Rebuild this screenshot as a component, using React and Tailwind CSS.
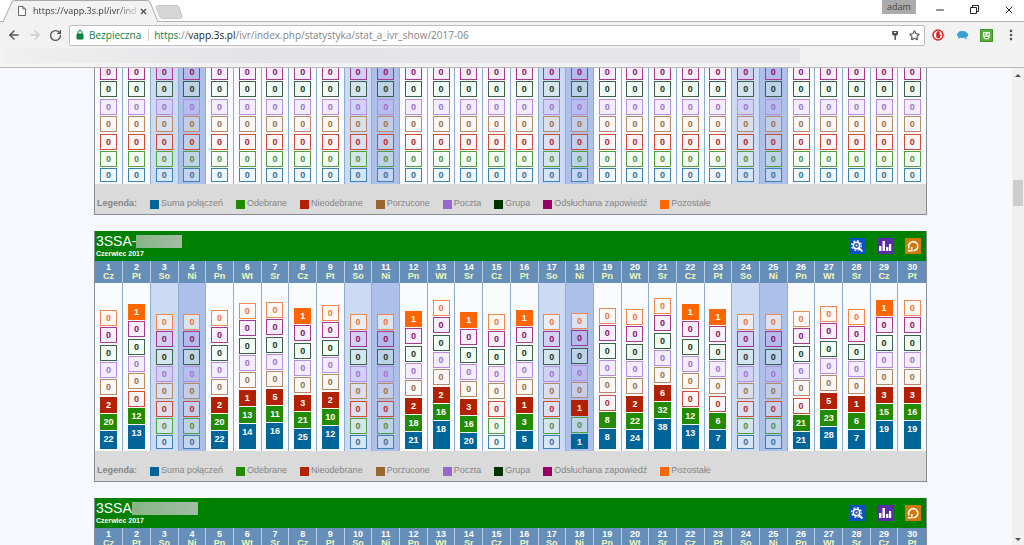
import { ArrowLeft, ArrowRight, RotateCw, Star, X, Minus, MoreVertical } from 'lucide-react'

const KINDS = [
  { label: 'Pozostałe', empty: 'border-[#f0884c] bg-[#fffaf4]/60 text-[#f0733a]', full: 'border-[#ff6600] bg-[#ff6600]', swatch: 'bg-[#ff6600]' },
  { label: 'Odsłuchana zapowiedź', empty: 'border-[#a8388a] bg-[#ff88ff]/10 text-[#8a1060]', full: 'border-[#990066] bg-[#990066]', swatch: 'bg-[#990066]' },
  { label: 'Grupa', empty: 'border-[#3f5f4c] bg-[#e0ffe0]/30 text-[#1c3424]', full: 'border-[#003300] bg-[#003300]', swatch: 'bg-[#003300]' },
  { label: 'Poczta', empty: 'border-[#b48ee0] bg-[#e0b8ff]/20 text-[#9a70cc]', full: 'border-[#9966cc] bg-[#9966cc]', swatch: 'bg-[#9966cc]' },
  { label: 'Porzucone', empty: 'border-[#b48a68] bg-[#fff0e0]/30 text-[#98704c]', full: 'border-[#996633] bg-[#996633]', swatch: 'bg-[#996633]' },
  { label: 'Nieodebrane', empty: 'border-[#d04a38] bg-[#fff0e8]/30 text-[#b42828]', full: 'border-[#b22200] bg-[#b22200]', swatch: 'bg-[#b22200]' },
  { label: 'Odebrane', empty: 'border-[#4fa23c] bg-[#e8ffe0]/30 text-[#4c8c44]', full: 'border-[#228b00] bg-[#228b00]', swatch: 'bg-[#228b00]' },
  { label: 'Suma połączeń', empty: 'border-[#3f80ac] bg-[#e0f8ff]/40 text-[#386c98]', full: 'border-[#006699] bg-[#006699]', swatch: 'bg-[#006699]' },
]

const WEEKDAYS = ['Cz', 'Pt', 'So', 'Ni', 'Pn', 'Wt', 'Sr']

// [total, answered, missed, other, bar height]
const JUNE = [
  [22, 20, 2, 0, 18], [13, 12, 0, 1, 24], [0, 0, 0, 0, 14], [0, 0, 0, 0, 14], [22, 20, 2, 0, 18],
  [14, 13, 1, 0, 25], [16, 11, 5, 0, 26], [25, 21, 3, 1, 20], [12, 10, 2, 0, 23], [0, 0, 0, 0, 14],
  [0, 0, 0, 0, 14], [21, 18, 2, 1, 17], [18, 16, 2, 0, 28], [20, 16, 3, 1, 16], [0, 0, 0, 0, 14],
  [5, 3, 1, 1, 18], [0, 0, 0, 0, 14], [1, 0, 1, 0, 15], [8, 8, 0, 0, 20], [24, 22, 2, 0, 19],
  [38, 32, 6, 0, 30], [13, 12, 0, 1, 24], [7, 6, 0, 1, 19], [0, 0, 0, 0, 14], [0, 0, 0, 0, 14],
  [21, 21, 0, 0, 17], [28, 23, 5, 0, 22], [7, 6, 1, 0, 19], [19, 15, 3, 1, 28], [19, 16, 3, 0, 28],
]
const EMPTY = JUNE.map(() => [0, 0, 0, 0, 14])

function dayBg(i) {
  const name = WEEKDAYS[i % 7]
  if (name === 'So') return 'bg-[#cddaf4]'
  if (name === 'Ni') return 'bg-[#adc0ea]'
  return 'bg-[#f9fbfe]'
}

function Day({ data, short }) {
  const [total, answered, missed, other, height] = data
  const values = [other, 0, 0, 0, 0, missed, answered]
  const sum = KINDS[7]
  return (
    <div className="flex flex-col items-center gap-px text-[9px] leading-[15px] font-bold">
      <div className={`flex flex-col justify-between ${short ? 'h-[103px]' : 'h-[120px]'}`}>
        {values.map((v, i) => (
          short && i === 0 ? null : (
            <div key={i} className={`h-4 w-[17px] border text-center ${v ? `${KINDS[i].full} text-white` : KINDS[i].empty}`}>
              {v}
            </div>
          )
        ))}
      </div>
      <div
        style={{ height }}
        className={`w-[17px] border text-center ${total ? `${sum.full} text-white` : `${sum.empty} leading-[13px]`}`}
      >
        {total}
      </div>
    </div>
  )
}

function Legend() {
  return (
    <div className="flex h-[30px] items-center gap-[13px] bg-[#dadada] pt-[10px] pl-0.5 text-[9px] whitespace-nowrap text-[#858585]">
      <span className="font-bold">Legenda:</span>
      {[...KINDS].reverse().map((k) => (
        <span key={k.label} className="flex items-center gap-0.5">
          <span className={`size-[9px] ${k.swatch}`} />
          {k.label}
        </span>
      ))}
    </div>
  )
}

function Actions() {
  return (
    <div className="flex gap-3 pr-[5px]">
      <button aria-label="Szczegóły" className="flex size-4 items-center justify-center bg-[#0b50c0]">
        <svg viewBox="0 0 16 16" className="size-4" fill="none" stroke="#fff">
          <circle cx="7.5" cy="7.5" r="3.2" strokeWidth="1.5" />
          <circle cx="7.5" cy="7.5" r="4.8" strokeWidth="1.3" strokeDasharray="1.9 1.87" />
          <circle cx="7.5" cy="7.5" r="1" fill="#fff" stroke="none" />
          <path d="M9.5 9.5l4 4" strokeWidth="1.8" />
        </svg>
      </button>
      <button aria-label="Wykres" className="flex size-4 items-center justify-center bg-[#5a2ca8]">
        <svg viewBox="0 0 16 16" className="size-4" fill="#fff">
          <path d="M2 8h2.400v5H2zM5.500 3h2.400v10H5.500zM9 9h2.400v4H9zM12 6h2.200v7H12z" />
        </svg>
      </button>
      <button aria-label="Odśwież" className="flex size-4 items-center justify-center bg-[#d07808]">
        <svg viewBox="0 0 16 16" className="size-4" fill="none" stroke="#fff" strokeWidth="1.6">
          <path d="M4.200 10.500a4.600 4.600 0 1 1 4.300 2.300" />
          <path d="M2.800 12.800h4V9" />
        </svg>
      </button>
    </div>
  )
}

function Panel({ name, blur, days, short }) {
  return (
    <section className="border border-t-0 border-[#888c94] bg-[#dadada]">
      {name && (
        <header className="flex h-[30px] items-center justify-between bg-[#008000] text-white">
          <div className="pl-px">
            <h2 className="flex items-center text-[14px] leading-4">
              {name}
              <span className={`h-[13px] bg-gradient-to-r from-[#86b586] to-[#a3bda5] ${blur}`} />
            </h2>
            <p className="text-[7px] leading-[10px] font-bold">Czerwiec 2017</p>
          </div>
          <Actions />
        </header>
      )}
      <table className="w-full table-fixed border-collapse">
        {name && (
          <thead>
            <tr className="h-[22px] bg-[#658eb8] text-[9px] leading-[9px]">
              {days.map((_, i) => (
                <th key={i} className="border-r border-[#b8cee6] p-0 text-white last:border-r-0">
                  {i + 1}
                  <span className="block text-[#f2f7c0]">{WEEKDAYS[i % 7]}</span>
                </th>
              ))}
            </tr>
          </thead>
        )}
        <tbody>
          <tr className={short ? 'h-[120px]' : 'h-[168px]'}>
            {days.map((d, i) => (
              <td key={i} className={`border-r border-[#8eabd0] p-0 pb-0.5 align-bottom last:border-r-0 ${dayBg(i)}`}>
                <Day data={d} short={short} />
              </td>
            ))}
          </tr>
        </tbody>
      </table>
      <Legend />
    </section>
  )
}

function TabBar() {
  return (
    <div className="relative flex h-[22px] items-start justify-between border-b border-[#b4b4b4] bg-white">
      <svg className="absolute top-0 left-0 h-[22px] w-[190px]" viewBox="0 0 190 22">
        <path d="M3 22L12 2Q13 .5 15 .5H147Q149 .5 150 2L158 22" fill="#f2f2f2" stroke="#a8a8a8" />
        <path d="M158 5.500H176Q178 5.500 179 7L182 16Q182 18.500 180 18.500H163Q161 18.500 160 17L156 8Q156 5.500 158 5.500" fill="#d6d6d6" stroke="#c4c4c4" />
      </svg>
      <div className="relative flex h-[22px] items-center pl-[18px]">
        <svg viewBox="0 0 8 10" className="mr-[7px] h-[10px] w-2" fill="#fff" stroke="#666">
          <path d="M.5.5h4.500l2.500 2.500v6.500h-7zM5 .5V3h2.500" />
        </svg>
        <span className="bg-gradient-to-r from-[#333] from-80% to-[#ccc] bg-clip-text text-[9px] whitespace-nowrap text-transparent">
          https://vapp.3s.pl/ivr/ind
        </span>
        <button aria-label="Zamknij kartę" className="ml-0.5">
          <X className="size-[9px] text-[#444]" strokeWidth={3} />
        </button>
      </div>
      <div className="flex items-start text-[#222]">
        <span className="mr-[18px] h-[14px] w-[34px] bg-[#ababab] text-center text-[9px] leading-[13px] text-[#444]">adam</span>
        <button aria-label="Minimalizuj" className="mt-1 mr-[23px]">
          <Minus className="size-3" strokeWidth={2} />
        </button>
        <button aria-label="Przywróć" className="mt-1 mr-[23px]">
          <svg viewBox="0 0 11 11" className="size-[11px]" fill="none" stroke="currentColor">
            <path d="M1.500 3.500h6v6h-6zM3.500 3V1.500h6v6H8" />
          </svg>
        </button>
        <button aria-label="Zamknij" className="mt-1 mr-[9px]">
          <X className="size-3" strokeWidth={2} />
        </button>
      </div>
    </div>
  )
}

function Toolbar() {
  return (
    <div className="flex h-[26px] items-center bg-[#f2f2f2] pl-[7px]">
      <button aria-label="Wstecz">
        <ArrowLeft className="size-[14px] text-[#555]" strokeWidth={2.5} />
      </button>
      <button aria-label="Dalej" className="ml-[7px]">
        <ArrowRight className="size-[14px] text-[#ccc]" strokeWidth={2.5} />
      </button>
      <button aria-label="Odśwież stronę" className="ml-[7px]">
        <RotateCw className="size-[13px] text-[#555]" strokeWidth={2.5} />
      </button>
      <div className="ml-[7px] flex h-[21px] flex-1 items-center rounded-xs border border-[#bcbcbc] bg-white pr-1 pl-1.5 text-[10px]">
        <svg viewBox="0 0 8 10" className="h-[10px] w-2" fill="#0b8043">
          <path d="M1 4h6v5H1z" stroke="#0b8043" />
          <path d="M2 4V2.500a2 2 0 0 1 4 0V4" fill="none" stroke="#0b8043" />
        </svg>
        <span className="ml-[5px] border-r border-[#ccc] pr-[7px] leading-3 text-[#0b8043]">Bezpieczna</span>
        <a href="#" className="ml-[5px] flex-1 whitespace-nowrap text-[#858585]">
          <span className="text-[#0b8043]">https</span>://<span className="text-[#222]">vapp.3s.pl</span>
          /ivr/index.php/statystyka/stat_a_ivr_show/2017-06
        </a>
        <button aria-label="Hasła">
          <svg viewBox="0 0 8 10" className="h-[10px] w-2" fill="#555">
            <path d="M1 1h6v3.500L5 6v4H3.500V6L1 4.500z" />
            <path d="M3 2h2v1H3z" fill="#fff" />
          </svg>
        </button>
        <button aria-label="Dodaj do zakładek" className="ml-2.5">
          <Star className="size-[11px] text-[#555]" strokeWidth={2.5} />
        </button>
      </div>
      <button aria-label="AdBlock" className="ml-[7px]">
        <svg viewBox="0 0 12 12" className="size-3">
          <circle cx="6" cy="6" r="5" fill="#fff" stroke="#e02020" strokeWidth="1.5" />
          <path d="M4.200 3.500h.8V2.500h.9v-.4h.9v.7h.9V6l.5-.6.6.5-1.300 3.300H5L4.200 7.500z" fill="#e02020" />
        </svg>
      </button>
      <button aria-label="Czat" className="ml-3">
        <svg viewBox="0 0 13 11" className="h-[11px] w-[13px]" fill="#3aa0d4">
          <path d="M2 3Q3 .5 6 1q4-.5 5 2 2 1 1 3-1 1-2 1l1 3-3-2.500q-2 1-4 0L2 9l.3-2.500Q-.5 5 2 3" />
        </svg>
      </button>
      <button aria-label="Rozszerzenie" className="ml-[11px]">
        <svg viewBox="0 0 13 13" className="size-[13px]">
          <path d="M.5.5h12v12H.5z" fill="#5cb040" stroke="#3c9028" />
          <path d="M3 3h7v4Q9 10.500 6.500 10.500T3 7z" fill="#e4f4dc" />
          <path d="M4.500 4.500h1v2h-1zM7.500 4.500h1v2h-1zM5 8h3v1H5z" fill="#3c9028" />
        </svg>
      </button>
      <button aria-label="Menu" className="mr-1.5 ml-[11px]">
        <MoreVertical className="size-[14px] text-[#555]" strokeWidth={2.5} />
      </button>
    </div>
  )
}

function Scrollbar() {
  return (
    <div className="flex w-3 flex-col items-center bg-[#f0f0f0] pt-1.5">
      <span className="border-x-[3px] border-b-[3px] border-x-transparent border-b-[#505050]" />
      <span className="mt-[103px] h-[26px] w-[10px] bg-[#cdcdcd]" />
      <span className="mt-auto mb-1 border-x-[3px] border-t-[3px] border-x-transparent border-t-[#505050]" />
    </div>
  )
}

export default function App() {
  return (
    <div className="flex h-screen flex-col overflow-hidden bg-[#f7f8fd] font-['Liberation_Sans',Arial,sans-serif]">
      <div className="font-['Open_Sans',sans-serif]">
        <TabBar />
        <Toolbar />
        <div className="h-5 border-b border-[#b8b8b8] bg-[#f2f2f2] pl-1">
          <div className="h-[15px] w-[78%] bg-gradient-to-r from-[#f0f0f0] via-[#e4e4e8] via-30% to-[#e6e6ea]" />
        </div>
      </div>
      <div className="flex min-h-0 flex-1">
        <main className="flex-1 overflow-hidden pr-[85px] pl-[94px]">
          <div className="-mt-1 flex flex-col gap-4">
            <Panel days={EMPTY} short />
            <Panel name="3SSA-" blur="w-[46px]" days={JUNE} />
            <Panel name="3SSA" blur="w-[66px]" days={EMPTY} />
          </div>
        </main>
        <Scrollbar />
      </div>
    </div>
  )
}
